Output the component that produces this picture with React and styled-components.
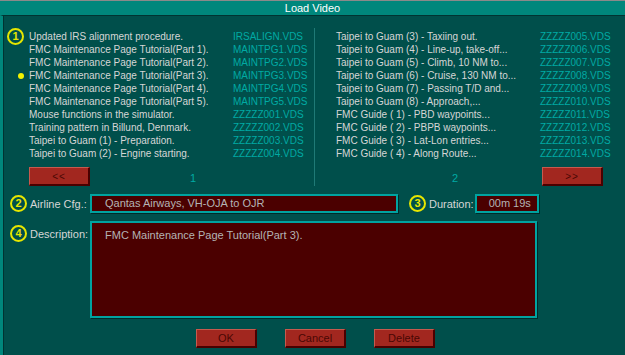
import { styled, createGlobalStyle } from "styled-components";

const GlobalStyle = createGlobalStyle`
  html, body { margin: 0; padding: 0; background: #004f4b; }
  body { font-family: "Liberation Sans", Arial, sans-serif; }
`;

const leftRows = [
  { desc: "Updated IRS alignment procedure.", file: "IRSALIGN.VDS", badge: "1" },
  { desc: "FMC Maintenance Page Tutorial(Part 1).", file: "MAINTPG1.VDS" },
  { desc: "FMC Maintenance Page Tutorial(Part 2).", file: "MAINTPG2.VDS" },
  { desc: "FMC Maintenance Page Tutorial(Part 3).", file: "MAINTPG3.VDS", selected: true },
  { desc: "FMC Maintenance Page Tutorial(Part 4).", file: "MAINTPG4.VDS" },
  { desc: "FMC Maintenance Page Tutorial(Part 5).", file: "MAINTPG5.VDS" },
  { desc: "Mouse functions in the simulator.", file: "ZZZZZ001.VDS" },
  { desc: "Training pattern in Billund, Denmark.", file: "ZZZZZ002.VDS" },
  { desc: "Taipei to Guam (1) - Preparation.", file: "ZZZZZ003.VDS" },
  { desc: "Taipei to Guam (2) - Engine starting.", file: "ZZZZZ004.VDS" },
];

const rightRows = [
  { desc: "Taipei to Guam (3) - Taxiing out.", file: "ZZZZZ005.VDS" },
  { desc: "Taipei to Guam (4) - Line-up, take-off...", file: "ZZZZZ006.VDS" },
  { desc: "Taipei to Guam (5) - Climb, 10 NM to...", file: "ZZZZZ007.VDS" },
  { desc: "Taipei to Guam (6) - Cruise, 130 NM to...", file: "ZZZZZ008.VDS" },
  { desc: "Taipei to Guam (7) - Passing T/D and...", file: "ZZZZZ009.VDS" },
  { desc: "Taipei to Guam (8) - Approach,...", file: "ZZZZZ010.VDS" },
  { desc: "FMC Guide ( 1) - PBD waypoints...", file: "ZZZZZ011.VDS" },
  { desc: "FMC Guide ( 2) - PBPB waypoints...", file: "ZZZZZ012.VDS" },
  { desc: "FMC Guide ( 3) - Lat-Lon entries...", file: "ZZZZZ013.VDS" },
  { desc: "FMC Guide ( 4) - Along Route...", file: "ZZZZZ014.VDS" },
];

export default function App() {
  return (
    <>
      <GlobalStyle />
      <Window>
        <TitleBar>Load Video</TitleBar>
        <Body>
          <Lists>
            <Column>
              {leftRows.map((r) => (
                <Row key={r.file} $lead={25}>
                  <Marker>
                    {r.badge && <Badge>{r.badge}</Badge>}
                    {r.selected && <Dot />}
                  </Marker>
                  <Desc>{r.desc}</Desc>
                  <File>{r.file}</File>
                </Row>
              ))}
              <Pager $pad={25}>
                <PageButton>&lt;&lt;</PageButton>
                <PageNum $offset={100}>1</PageNum>
              </Pager>
            </Column>
            <Column $divider>
              {rightRows.map((r) => (
                <Row key={r.file} $lead={21}>
                  <Marker />
                  <Desc>{r.desc}</Desc>
                  <File>{r.file}</File>
                </Row>
              ))}
              <Pager $pad={137}>
                <PageNum $offset={0}>2</PageNum>
                <PageButton $push>&gt;&gt;</PageButton>
              </Pager>
            </Column>
          </Lists>

          <FormRow>
            <LabelCell>
              <Badge>2</Badge>
              <Label>Airline Cfg.:</Label>
            </LabelCell>
            <Field $w={308}>Qantas Airways, VH-OJA to OJR</Field>
            <Badge $gap={11}>3</Badge>
            <Label $tight>Duration:</Label>
            <Field $w={64} $small>00m 19s</Field>
          </FormRow>

          <FormRow $start>
            <LabelCell $drop={3}>
              <Badge>4</Badge>
              <Label>Description:</Label>
            </LabelCell>
            <Field $w={447} $h={97} $area>
              FMC Maintenance Page Tutorial(Part 3).
            </Field>
          </FormRow>

          <Actions>
            <ActionButton>OK</ActionButton>
            <ActionButton>Cancel</ActionButton>
            <ActionButton>Delete</ActionButton>
          </Actions>
        </Body>
      </Window>
    </>
  );
}

const Window = styled.div`
  width: 625px;
  height: 355px;
  border-top: 1px solid #8a8a8a;
  box-sizing: border-box;
  display: flex;
  flex-direction: column;
  background: #004f4b;
  overflow: hidden;
`;

const TitleBar = styled.div`
  height: 14px;
  background: #00877c;
  color: #ffffff;
  font-size: 11px;
  line-height: 14px;
  text-align: center;
`;

const Body = styled.div`
  flex: 1;
  border-top: 1px solid #003432;
  border-left: 3px solid #00877c;
  box-shadow: inset 1px 0 0 #003432;
  padding: 12px 0 0 1px;
`;

const Lists = styled.div`
  display: grid;
  grid-template-columns: 310px 1fr;
`;

const Column = styled.div`
  padding-top: 2px;
  border-left: ${(p) => (p.$divider ? "1px solid #1f7a76" : "none")};
  height: 156px;
`;

const Row = styled.div`
  display: grid;
  grid-template-columns: ${(p) => p.$lead}px 204px auto;
  height: 13px;
  align-items: center;
  font-size: 10px;
  line-height: 13px;
  white-space: nowrap;
`;

const Marker = styled.div`
  position: relative;
  height: 13px;
`;

const Badge = styled.span`
  display: inline-flex;
  align-items: center;
  justify-content: center;
  width: 13px;
  height: 13px;
  border: 2px solid #e6e600;
  border-radius: 50%;
  color: #e6e600;
  font-size: 11px;
  font-weight: bold;
  line-height: 1;
  flex: none;
  margin-left: ${(p) => (p.$gap ? p.$gap : 0)}px;
  ${Marker} & {
    position: absolute;
    left: 3px;
    top: -2px;
  }
`;

const Dot = styled.span`
  position: absolute;
  left: 14px;
  top: 4px;
  width: 6px;
  height: 6px;
  border-radius: 50%;
  background: #f2f200;
`;

const Desc = styled.span`
  color: #d6d6d6;
`;

const File = styled.span`
  color: #00aaa4;
`;

const Pager = styled.div`
  display: flex;
  align-items: center;
  margin-top: 7px;
  padding-left: ${(p) => p.$pad}px;
  height: 19px;
`;

const PageNum = styled.span`
  color: #00aaa4;
  font-size: 11px;
  margin-left: ${(p) => p.$offset}px;
  padding-top: 2px;
`;

const redButton = `
  box-sizing: border-box;
  width: 61px;
  height: 19px;
  background: #a2271f;
  border-top: 1px solid #c65a4e;
  border-left: 1px solid #c65a4e;
  border-right: 2px solid #4a0000;
  border-bottom: 2px solid #4a0000;
  color: #4a0804;
  font-size: 10px;
  font-family: "Liberation Sans", Arial, sans-serif;
  display: flex;
  align-items: center;
  justify-content: center;
  padding: 0;
`;

const PageButton = styled.button`
  ${redButton}
  margin-left: ${(p) => (p.$push ? "84px" : "0")};
  letter-spacing: 1px;
`;

const FormRow = styled.div`
  display: flex;
  align-items: ${(p) => (p.$start ? "flex-start" : "center")};
  margin-top: 8px;
`;

const LabelCell = styled.div`
  width: 86px;
  display: flex;
  align-items: center;
  padding-left: 6px;
  margin-top: ${(p) => (p.$drop ? p.$drop : 0)}px;
  box-sizing: border-box;
  height: 19px;
  flex: none;
`;

const Label = styled.span`
  color: #d6d6d6;
  font-size: 11px;
  margin-left: 3px;
  margin-right: ${(p) => (p.$tight ? 1 : 3)}px;
  white-space: nowrap;
`;

const Field = styled.div`
  box-sizing: border-box;
  width: ${(p) => p.$w}px;
  height: ${(p) => (p.$h ? p.$h : 19)}px;
  background: #4b0000;
  border: 2px solid #00a3a0;
  box-shadow: 1px 1px 0 #002b29;
  color: #b4b4b4;
  font-size: 11px;
  line-height: 15px;
  padding: ${(p) => (p.$area ? "5px 0 0 13px" : p.$small ? "0 0 0 12px" : "0 0 0 13px")};
  white-space: nowrap;
  flex: none;
`;

const Actions = styled.div`
  display: flex;
  gap: 28px;
  margin-top: 11px;
  padding-left: 192px;
`;

const ActionButton = styled.button`
  ${redButton}
  font-size: 11px;
`;
